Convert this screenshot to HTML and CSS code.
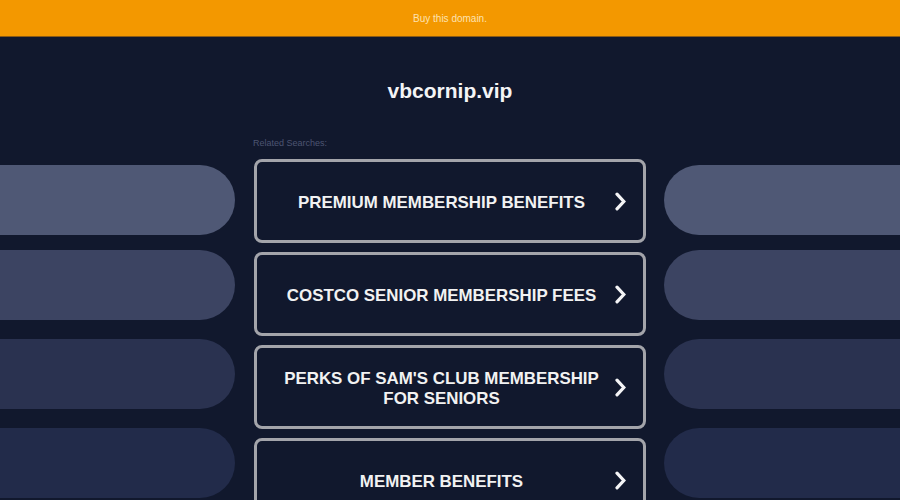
FILE: index.html
```html
<!DOCTYPE html>
<html lang="en">
<head>
<meta charset="utf-8">
<title>vbcornip.vip</title>
<link rel="stylesheet" href="styles.css">
</head>
<body>
<div class="topbar"><a class="buy" href="#">Buy this domain.</a></div>
<h1 class="title">vbcornip.vip</h1>
<div class="main">
  <div class="side side-left">
    <div class="pill p1"></div>
    <div class="pill p2"></div>
    <div class="pill p3"></div>
    <div class="pill p4"></div>
  </div>
  <div class="center">
    <div class="label">Related Searches:</div>
    <div class="links">
      <a class="link" href="#"><span class="link-text">PREMIUM MEMBERSHIP BENEFITS</span><svg class="chev" viewBox="0 0 11 19"><polyline points="2,2.2 8.8,9.5 2,16.8"/></svg></a>
      <a class="link" href="#"><span class="link-text">COSTCO SENIOR MEMBERSHIP FEES</span><svg class="chev" viewBox="0 0 11 19"><polyline points="2,2.2 8.8,9.5 2,16.8"/></svg></a>
      <a class="link" href="#"><span class="link-text">PERKS OF SAM'S CLUB MEMBERSHIP FOR SENIORS</span><svg class="chev" viewBox="0 0 11 19"><polyline points="2,2.2 8.8,9.5 2,16.8"/></svg></a>
      <a class="link" href="#"><span class="link-text">MEMBER BENEFITS</span><svg class="chev" viewBox="0 0 11 19"><polyline points="2,2.2 8.8,9.5 2,16.8"/></svg></a>
    </div>
  </div>
  <div class="side side-right">
    <div class="pill p1"></div>
    <div class="pill p2"></div>
    <div class="pill p3"></div>
    <div class="pill p4"></div>
  </div>
</div>
</body>
</html>
```
FILE: styles.css
```css
html, body {
  margin: 0;
  padding: 0;
  height: 100%;
  overflow: hidden;
}
body {
  background: #11182d;
  font-family: "Liberation Sans", Arial, sans-serif;
  color: #f2f2f2;
}
.topbar {
  height: 36px;
  background: #f39800;
  border-bottom: 1px solid #8a5a14;
  display: flex;
  align-items: center;
  justify-content: center;
}
.buy {
  font-size: 10px;
  color: #fde2b0;
  text-decoration: none;
}
.title {
  margin: 42px 0 0;
  font-size: 21px;
  line-height: 24px;
  font-weight: bold;
  text-align: center;
  color: #f4f4f6;
}
.main {
  display: grid;
  grid-template-columns: 1fr 392px 1fr;
  column-gap: 19px;
  margin-top: 34px;
}
.side {
  display: flex;
  flex-direction: column;
  gap: 19px;
  padding-top: 28px;
}
.pill {
  height: 70px;
  flex: none;
}
.pill.p1 { margin-bottom: -4px; background: #4f5875; }
.pill.p2 { background: #3c4462; }
.pill.p3 { background: #2a3250; }
.pill.p4 { background: #222b4a; }
.side-left .pill { border-radius: 0 35px 35px 0; }
.side-right .pill { border-radius: 35px 0 0 35px; margin-left: -1px; }
.label {
  font-size: 9px;
  line-height: 12px;
  color: #4d5572;
  margin: 0 0 10px -1px;
}
.links {
  display: flex;
  flex-direction: column;
  gap: 9px;
}
.link {
  box-sizing: border-box;
  height: 84px;
  border: 3px solid #a3a4aa;
  border-radius: 8px;
  display: flex;
  align-items: center;
  padding: 0 17px 0 20px;
  gap: 9px;
  text-decoration: none;
  color: #f2f2f2;
}
.link-text {
  flex: 1;
  text-align: center;
  font-size: 16.9px;
  line-height: 20px;
  font-weight: bold;
  padding-top: 3px;
}
.chev {
  width: 11px;
  height: 19px;
  flex: none;
  margin-top: 1px;
}
.chev polyline {
  fill: none;
  stroke: #f4f4f6;
  stroke-width: 3.2;
  stroke-linecap: round;
  stroke-linejoin: miter;
}
```
